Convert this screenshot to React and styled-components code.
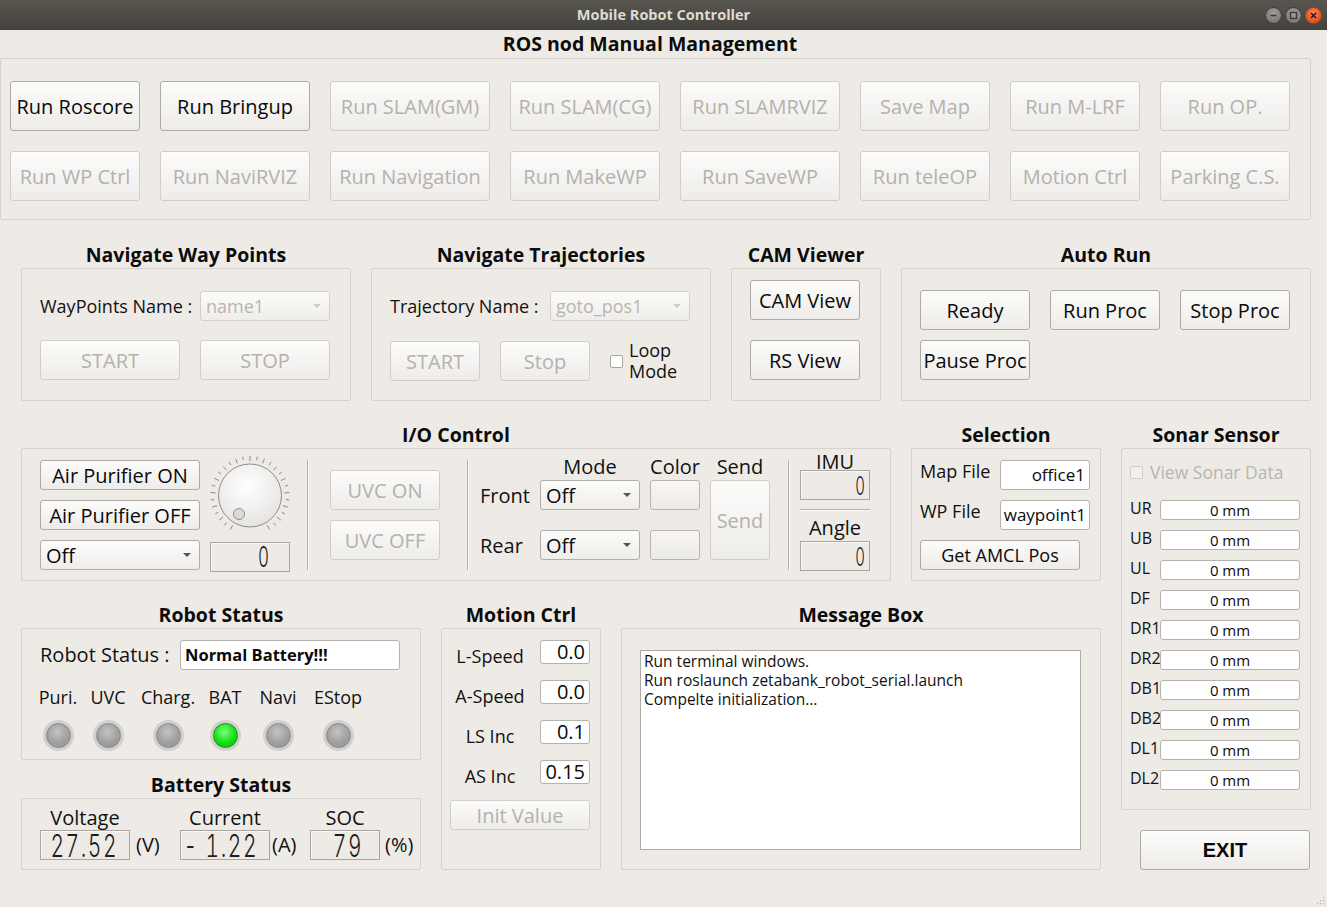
import React from 'react';
import styled, { createGlobalStyle } from 'styled-components';

const GlobalStyle = createGlobalStyle`
  html, body { margin: 0; padding: 0; background: #eeebe7; }
  body { font-family: "Open Sans", "Noto Sans", sans-serif; color: #111; }
  * { box-sizing: border-box; }
`;

const Window = styled.div`
  width: 1327px;
  height: 907px;
  background: #eeebe7;
  display: flex;
  flex-direction: column;
  position: relative;
  overflow: hidden;
`;

const TitleBar = styled.div`
  flex: none;
  height: 30px;
  display: grid;
  grid-template-columns: 1fr auto 1fr;
  align-items: center;
  background: linear-gradient(#58564f, #44423e);
  color: #dfdbd2;
  font-size: 14.5px;
  font-weight: 700;
`;

const TitleText = styled.div`
  grid-column: 2;
  margin-top: -2px;
`;

const WinButtons = styled.div`
  grid-column: 3;
  justify-self: end;
  display: flex;
  gap: 3px;
  padding-right: 5px;
`;

const WinBtn = styled.div`
  width: 17px;
  height: 17px;
  border-radius: 50%;
  display: flex;
  align-items: center;
  justify-content: center;
  background: ${p => (p.$close
    ? 'radial-gradient(circle at 50% 35%, #f7875a, #e0501c 75%)'
    : 'radial-gradient(circle at 50% 35%, #a3a09a, #7b7974 75%)')};
  border: 1px solid ${p => (p.$close ? '#b5430f' : '#3f3e3a')};
`;

const Content = styled.div`
  flex: 1;
  display: flex;
  flex-direction: column;
`;

const MainTitle = styled.h1`
  margin: 0;
  width: 1300px;
  height: 28px;
  line-height: 28px;
  text-align: center;
  font-size: 19.5px;
  font-weight: 700;
  color: #0c0c0c;
`;

const Panel = styled.div`
  width: ${p => (p.$w ? `${p.$w}px` : '100%')};
  height: ${p => p.$h}px;
  border: 1px solid #d5d1cc;
  border-radius: 2px;
  padding: ${p => p.$pad || '0'};
`;

const LaunchGrid = styled.div`
  display: grid;
  grid-template-columns: 130px 150px 160px 150px 160px 130px 130px 130px;
  grid-auto-rows: 50px;
  column-gap: 20px;
  row-gap: 20px;
`;

const Button = styled.button`
  width: ${p => (p.$w ? `${p.$w}px` : '100%')};
  height: ${p => (p.$h ? `${p.$h}px` : '100%')};
  margin: 0;
  padding: 0;
  font-family: ${p => (p.$bold ? '"Liberation Sans", Arial, sans-serif' : '"Open Sans", sans-serif')};
  font-size: ${p => p.$fs || 20}px;
  font-weight: ${p => (p.$bold ? 700 : 400)};
  color: ${p => (p.disabled ? '#b4b1ac' : '#0a0a0a')};
  background: linear-gradient(#fcfcfb, #eeece9);
  border: 1px solid ${p => (p.disabled ? '#d1cec9' : '#aeaba6')};
  border-radius: 3px;
  white-space: nowrap;
  display: flex;
  align-items: center;
  justify-content: center;
  flex: none;
`;

const Row = styled.div`
  display: flex;
  align-items: flex-start;
  gap: ${p => p.$gap ?? 20}px;
  padding-left: ${p => p.$pl || 0}px;
  margin-top: ${p => p.$mt || 0}px;
`;

const Col = styled.div`
  display: flex;
  flex-direction: column;
  gap: ${p => p.$gap || 0}px;
  width: ${p => (p.$w ? `${p.$w}px` : 'auto')};
  margin-top: ${p => p.$mt || 0}px;
  margin-left: ${p => p.$ml || 0}px;
  flex: none;
`;

const GroupBox = styled.section`
  display: flex;
  flex-direction: column;
  width: ${p => p.$w}px;
  flex: none;
`;

const GroupTitle = styled.h2`
  margin: 0;
  height: 27px;
  line-height: 27px;
  text-align: center;
  font-size: 19.5px;
  font-weight: 700;
  color: #0c0c0c;
  white-space: nowrap;
`;

const Group = ({ title, w, h, pad, children }) => (
  <GroupBox $w={w}>
    <GroupTitle>{title}</GroupTitle>
    <Panel $h={h} $pad={pad}>{children}</Panel>
  </GroupBox>
);

const Label = styled.span`
  display: block;
  width: ${p => (p.$w ? `${p.$w}px` : 'auto')};
  font-size: ${p => p.$fs || 18}px;
  line-height: ${p => p.$lh || 24}px;
  text-align: ${p => p.$align || 'left'};
  white-space: nowrap;
  flex: none;
  color: #111;
`;

const FieldRow = styled.div`
  display: flex;
  align-items: ${p => p.$align || 'center'};
  margin-top: ${p => p.$mt || 0}px;
  gap: ${p => p.$gap || 0}px;
`;

const Combo = styled.div`
  width: ${p => (p.$w ? `${p.$w}px` : '100%')};
  height: ${p => (p.$h ? `${p.$h}px` : '100%')};
  display: flex;
  align-items: center;
  justify-content: space-between;
  padding: 0 8px 0 5px;
  border: 1px solid ${p => (p.$disabled ? '#d3d0cb' : '#b1aea9')};
  border-radius: 3px;
  background: linear-gradient(#fcfcfb, #efedea);
  font-size: ${p => p.$fs || 20}px;
  color: ${p => (p.$disabled ? '#b8b5b0' : '#0a0a0a')};
  flex: none;
`;

const Caret = styled.span`
  width: 0;
  height: 0;
  border-left: 4px solid transparent;
  border-right: 4px solid transparent;
  border-top: 4px solid ${p => (p.$disabled ? '#cdcac5' : '#555')};
`;

const Field = styled.div`
  width: ${p => p.$w}px;
  height: ${p => p.$h}px;
  background: #fff;
  border: 1px solid #b6b3ae;
  border-radius: 3px;
  font-size: ${p => p.$fs || 18}px;
  font-weight: ${p => (p.$bold ? 700 : 400)};
  line-height: ${p => p.$h - 2}px;
  text-align: ${p => p.$align || 'left'};
  padding: 0 ${p => p.$pr ?? 4}px 0 ${p => p.$pl ?? 4}px;
  white-space: nowrap;
  flex: none;
  color: #0a0a0a;
`;

const CheckBox = styled.span`
  width: 13px;
  height: 13px;
  border: 1px solid ${p => (p.$disabled ? '#d2cfca' : '#a9a6a1')};
  border-radius: 2px;
  background: ${p => (p.$disabled ? '#f2f1ef' : '#fff')};
  flex: none;
`;

const CheckText = styled.span`
  margin-left: ${p => p.$ml || 6}px;
  font-size: ${p => p.$fs || 18}px;
  line-height: ${p => p.$lh || 21}px;
  color: ${p => (p.$disabled ? '#b8b5b0' : '#111')};
  white-space: nowrap;
`;

const AutoGrid = styled.div`
  display: grid;
  grid-template-columns: repeat(3, 110px);
  grid-auto-rows: 40px;
  column-gap: 20px;
  row-gap: 10px;
`;

const IOBody = styled.div`
  display: flex;
  align-items: flex-start;
`;

const VSep = styled.div`
  flex: none;
  width: 2px;
  height: 110px;
  border-left: 1px solid #b3b0ab;
  border-right: 1px solid #fbfaf8;
  margin-left: ${p => p.$ml}px;
`;

const HSep = styled.div`
  height: 2px;
  border-top: 1px solid #b3b0ab;
  border-bottom: 1px solid #fbfaf8;
  margin: ${p => p.$m};
`;

const LightGrid = styled.div`
  margin-left: ${p => p.$ml}px;
  display: grid;
  grid-template-columns: 50px 100px 50px 60px;
  grid-template-rows: 20px 30px 20px 30px;
  column-gap: 10px;
  flex: none;
`;

const HeadCell = styled.span`
  grid-row: 1;
  grid-column: ${p => p.$col};
  justify-self: center;
  font-size: 20px;
  line-height: 14px;
  white-space: nowrap;
`;

const SideCell = styled.span`
  grid-column: 1;
  grid-row: ${p => p.$row};
  align-self: center;
  font-size: 20px;
  line-height: 30px;
  padding-top: 2px;
  white-space: nowrap;
`;

const Swatch = styled.div`
  grid-column: 3;
  grid-row: ${p => p.$row};
  border: 1px solid #b8b5b0;
  border-radius: 3px;
  background: linear-gradient(#f8f7f6, #eceae7);
`;

const GridSlot = styled.div`
  grid-column: ${p => p.$col};
  grid-row: ${p => p.$row};
`;

const Lcd = styled.div`
  width: ${p => p.$w}px;
  height: ${p => p.$h}px;
  border: 1px solid #a9a6a1;
  box-shadow: inset 1px 1px 0 #faf9f7;
  display: flex;
  align-items: center;
  justify-content: flex-end;
  padding-right: ${p => p.$pr}px;
  flex: none;
`;

const LcdText = styled.span`
  display: inline-block;
  font-family: Inter, "Liberation Sans", sans-serif;
  font-weight: 300;
  font-variant-numeric: tabular-nums;
  font-size: ${p => p.$fs}px;
  line-height: 1;
  transform: scaleY(${p => p.$sy});
  color: #1d1d1d;
  letter-spacing: ${p => p.$ls || 0}px;
  white-space: pre;
`;

const LedGrid = styled.div`
  display: grid;
  grid-template-columns: 36px 64px 56px 58px 48px 72px;
  grid-template-rows: 24px 31px;
  row-gap: 11px;
  justify-items: center;
  margin-top: 15px;
`;

const Led = styled.div`
  width: 31px;
  height: 31px;
  border-radius: 50%;
  background: radial-gradient(circle, #d2d0cd 70%, #e6e4e1 100%);
  display: flex;
  align-items: center;
  justify-content: center;
  &::after {
    content: '';
    width: 25px;
    height: 25px;
    border-radius: 50%;
    box-sizing: border-box;
    border: 1px solid ${p => (p.$on ? '#0e9a0e' : '#8a8a8a')};
    background: ${p => (p.$on
      ? 'radial-gradient(circle at 45% 35%, #7dff7d, #12e012 55%, #0bb80b)'
      : 'radial-gradient(circle at 45% 35%, #c4c4c4, #a0a0a0 55%, #929292)')};
  }
`;

const BatRow = styled.div`
  display: grid;
  grid-template-columns: 140px 130px auto;
`;

const BatCell = styled.div`
  display: grid;
  grid-template-columns: ${p => p.$lw}px auto;
  grid-template-rows: 25px 30px;
  align-items: center;
`;

const BatLabel = styled.span`
  grid-column: 1;
  justify-self: center;
  font-size: 20px;
  line-height: 25px;
  white-space: nowrap;
`;

const Unit = styled.span`
  margin-left: ${p => p.$ml}px;
  font-size: 20px;
  line-height: 30px;
  white-space: nowrap;
`;

const MotionGrid = styled.div`
  display: grid;
  grid-template-columns: 80px 50px;
  grid-template-rows: repeat(4, 24px) 30px;
  column-gap: 10px;
  row-gap: 16px;
`;

const MotionLabel = styled.span`
  justify-self: center;
  font-size: 18px;
  line-height: 24px;
  padding-top: 4px;
  white-space: nowrap;
`;

const WideSlot = styled.div`
  grid-column: 1 / 3;
`;

const TextArea = styled.div`
  width: 441px;
  height: 200px;
  background: #fff;
  border: 1px solid #aeaba7;
  padding: 1px 3px;
  font-size: 15.5px;
  line-height: 19px;
  color: #111;
  white-space: pre;
`;

const SonarList = styled.div`
  display: flex;
  flex-direction: column;
  gap: 10px;
  margin-top: 18px;
`;

const SonarLabel = styled.span`
  width: 30px;
  font-size: 16px;
  line-height: 20px;
  margin-top: -4px;
  flex: none;
  white-space: nowrap;
`;

const ExitWrap = styled.div`
  margin: 20px 0 0 19px;
`;

const Grip = styled.svg`
  position: absolute;
  right: 2px;
  bottom: 2px;
`;

const launch = [
  ['Run Roscore', true], ['Run Bringup', true], ['Run SLAM(GM)'], ['Run SLAM(CG)'],
  ['Run SLAMRVIZ'], ['Save Map'], ['Run M-LRF'], ['Run OP.'],
  ['Run WP Ctrl'], ['Run NaviRVIZ'], ['Run Navigation'], ['Run MakeWP'],
  ['Run SaveWP'], ['Run teleOP'], ['Motion Ctrl'], ['Parking C.S.'],
];

const sonar = ['UR', 'UB', 'UL', 'DF', 'DR1', 'DR2', 'DB1', 'DB2', 'DL1', 'DL2'];

const leds = [
  ['Puri.', false], ['UVC', false], ['Charg.', false], ['BAT', true], ['Navi', false], ['EStop', false],
];

const motion = [['L-Speed', '0.0'], ['A-Speed', '0.0'], ['LS Inc', '0.1'], ['AS Inc', '0.15']];

const Dial = () => {
  const ticks = [];
  const n = 28;
  for (let i = 0; i <= n; i += 1) {
    const a = ((240 - (i * 300) / n) * Math.PI) / 180;
    const r1 = i % 2 === 0 ? 34.5 : 36;
    const r2 = 39.5;
    ticks.push(
      <line
        key={i}
        x1={Math.cos(a) * r1}
        y1={-Math.sin(a) * r1}
        x2={Math.cos(a) * r2}
        y2={-Math.sin(a) * r2}
      />,
    );
  }
  return (
    <svg width="80" height="77" viewBox="-40 -35.5 80 77" style={{ overflow: 'visible', display: 'block' }}>
      <defs>
        <radialGradient id="knob" cx="45%" cy="35%" r="70%">
          <stop offset="0%" stopColor="#ffffff" />
          <stop offset="100%" stopColor="#e4e2df" />
        </radialGradient>
      </defs>
      <g stroke="#8d8b87" strokeWidth="1">{ticks}</g>
      <circle cx="0" cy="0" r="31.5" fill="url(#knob)" stroke="#8f8d89" strokeWidth="1" />
      <circle cx="-11" cy="18.5" r="5.5" fill="#dddbd8" stroke="#8f8d89" strokeWidth="1" />
    </svg>
  );
};

export default function App() {
  return (
    <>
      <GlobalStyle />
      <Window>
        <TitleBar>
          <TitleText>Mobile Robot Controller</TitleText>
          <WinButtons>
            <WinBtn>
              <svg width="9" height="9" viewBox="0 0 9 9">
                <line x1="1.5" y1="4.5" x2="7.5" y2="4.5" stroke="#3a3935" strokeWidth="1.6" />
              </svg>
            </WinBtn>
            <WinBtn>
              <svg width="9" height="9" viewBox="0 0 9 9">
                <rect x="1.5" y="1.5" width="6" height="6" fill="none" stroke="#3a3935" strokeWidth="1.3" />
              </svg>
            </WinBtn>
            <WinBtn $close>
              <svg width="9" height="9" viewBox="0 0 9 9">
                <path d="M2 2 L7 7 M7 2 L2 7" stroke="#3b1608" strokeWidth="1.6" />
              </svg>
            </WinBtn>
          </WinButtons>
        </TitleBar>

        <Content>
          <MainTitle>ROS nod Manual Management</MainTitle>
          <Panel $w={1311} $h={162} $pad="22px 0 0 9px">
            <LaunchGrid>
              {launch.map(([label, on]) => (
                <Button key={label} disabled={!on}>{label}</Button>
              ))}
            </LaunchGrid>
          </Panel>

          <Row $pl={21} $mt={21}>
            <Group title="Navigate Way Points" w={330} h={133} pad="22px 0 0 18px">
              <FieldRow>
                <Label $w={160}>WayPoints Name :</Label>
                <Combo $w={130} $h={30} $fs={18} $disabled>
                  name1
                  <Caret $disabled />
                </Combo>
              </FieldRow>
              <FieldRow $mt={19} $gap={20}>
                <Button $w={140} $h={40} disabled>START</Button>
                <Button $w={130} $h={40} disabled>STOP</Button>
              </FieldRow>
            </Group>

            <Group title="Navigate Trajectories" w={340} h={133} pad="22px 0 0 18px">
              <FieldRow>
                <Label $w={160}>Trajectory Name :</Label>
                <Combo $w={140} $h={30} $fs={18} $disabled>
                  goto_pos1
                  <Caret $disabled />
                </Combo>
              </FieldRow>
              <FieldRow $mt={19} $gap={20}>
                <Button $w={90} $h={40} disabled>START</Button>
                <Button $w={90} $h={40} disabled>Stop</Button>
                <FieldRow>
                  <CheckBox />
                  <CheckText>
                    Loop
                    <br />
                    Mode
                  </CheckText>
                </FieldRow>
              </FieldRow>
            </Group>

            <Group title="CAM Viewer" w={150} h={133} pad="11px 0 0 18px">
              <Col $gap={20}>
                <Button $w={110} $h={40}>CAM View</Button>
                <Button $w={110} $h={40}>RS View</Button>
              </Col>
            </Group>

            <Group title="Auto Run" w={410} h={133} pad="21px 0 0 18px">
              <AutoGrid>
                <Button>Ready</Button>
                <Button>Run Proc</Button>
                <Button>Stop Proc</Button>
                <Button>Pause Proc</Button>
              </AutoGrid>
            </Group>
          </Row>

          <Row $pl={21} $mt={20}>
            <Col $w={1080}>
              <Row>
                <Group title="I/O Control" w={870} h={133} pad="11px 0 0 18px">
                  <IOBody>
                    <Col $w={160} $gap={10}>
                      <Button $w={160} $h={30}>Air Purifier ON</Button>
                      <Button $w={160} $h={30}>Air Purifier OFF</Button>
                      <Combo $w={160} $h={30}>
                        Off
                        <Caret />
                      </Combo>
                    </Col>
                    <Col $w={80} $ml={10} $gap={5}>
                      <Dial />
                      <Lcd $w={80} $h={30} $pr={20}>
                        <LcdText $fs={17} $sy={1.7}>0</LcdText>
                      </Lcd>
                    </Col>
                    <VSep $ml={17} />
                    <Col $w={110} $ml={21} $mt={10} $gap={10}>
                      <Button $w={110} $h={40} disabled>UVC ON</Button>
                      <Button $w={110} $h={40} disabled>UVC OFF</Button>
                    </Col>
                    <VSep $ml={27} />
                    <LightGrid $ml={11}>
                      <HeadCell $col={2}>Mode</HeadCell>
                      <HeadCell $col={3}>Color</HeadCell>
                      <HeadCell $col={4}>Send</HeadCell>
                      <SideCell $row={2}>Front</SideCell>
                      <SideCell $row={4}>Rear</SideCell>
                      <GridSlot $col={2} $row={2}>
                        <Combo>
                          Off
                          <Caret />
                        </Combo>
                      </GridSlot>
                      <GridSlot $col={2} $row={4}>
                        <Combo>
                          Off
                          <Caret />
                        </Combo>
                      </GridSlot>
                      <Swatch $row={2} />
                      <Swatch $row={4} />
                      <GridSlot $col={4} $row="2 / 5">
                        <Button disabled>Send</Button>
                      </GridSlot>
                    </LightGrid>
                    <VSep $ml={18} />
                    <Col $w={70} $ml={10} $mt={-6}>
                      <Label $fs={20} $lh={16} $align="center" $w={70}>IMU</Label>
                      <Lcd $w={70} $h={30} $pr={4}>
                        <LcdText $fs={15} $sy={1.75}>0</LcdText>
                      </Lcd>
                      <HSep $m="9px 0 4px" />
                      <Label $fs={20} $lh={26} $align="center" $w={70}>Angle</Label>
                      <Lcd $w={70} $h={30} $pr={4}>
                        <LcdText $fs={15} $sy={1.75}>0</LcdText>
                      </Lcd>
                    </Col>
                  </IOBody>
                </Group>

                <Group title="Selection" w={190} h={133} pad="11px 0 0 8px">
                  <Col $gap={10}>
                    <FieldRow $align="flex-start">
                      <Label $w={80} $lh={22}>Map File</Label>
                      <Field $w={90} $h={30} $fs={17} $align="right">office1</Field>
                    </FieldRow>
                    <FieldRow $align="flex-start">
                      <Label $w={80} $lh={22}>WP File</Label>
                      <Field $w={90} $h={30} $fs={17} $align="right" $pr={3} $pl={2}>waypoint1</Field>
                    </FieldRow>
                    <Button $w={160} $h={30} $fs={18}>Get AMCL Pos</Button>
                  </Col>
                </Group>
              </Row>

              <Row $mt={20}>
                <Col $w={400} $gap={11}>
                  <Group title="Robot Status" w={400} h={132} pad="11px 0 0 18px">
                    <FieldRow>
                      <Label $w={140} $fs={20} $lh={30}>Robot Status :</Label>
                      <Field $w={220} $h={30} $fs={16.5} $bold>Normal Battery!!!</Field>
                    </FieldRow>
                    <LedGrid>
                      {leds.map(([name]) => (
                        <Label key={name} $lh={24}>{name}</Label>
                      ))}
                      {leds.map(([name, on]) => (
                        <Led key={`${name}-led`} $on={on} />
                      ))}
                    </LedGrid>
                  </Group>
                  <Group title="Battery Status" w={400} h={72} pad="6px 0 0 18px">
                    <BatRow>
                      <BatCell $lw={90}>
                        <BatLabel>Voltage</BatLabel>
                        <span />
                        <Lcd $w={90} $h={30} $pr={11}>
                          <LcdText $fs={21} $sy={1.5} $ls={1.5}>27.52</LcdText>
                        </Lcd>
                        <Unit $ml={6}>(V)</Unit>
                      </BatCell>
                      <BatCell $lw={90}>
                        <BatLabel>Current</BatLabel>
                        <span />
                        <Lcd $w={90} $h={30} $pr={11}>
                          <LcdText $fs={21} $sy={1.5} $ls={1.5}>- 1.22</LcdText>
                        </Lcd>
                        <Unit $ml={2}>(A)</Unit>
                      </BatCell>
                      <BatCell $lw={70}>
                        <BatLabel>SOC</BatLabel>
                        <span />
                        <Lcd $w={70} $h={30} $pr={16}>
                          <LcdText $fs={21} $sy={1.5} $ls={1.5}>79</LcdText>
                        </Lcd>
                        <Unit $ml={5}>(%)</Unit>
                      </BatCell>
                    </BatRow>
                  </Group>
                </Col>

                <Group title="Motion Ctrl" w={160} h={242} pad="11px 0 0 8px">
                  <MotionGrid>
                    {motion.map(([name, val]) => (
                      <React.Fragment key={name}>
                        <MotionLabel>{name}</MotionLabel>
                        <Field $w={50} $h={24} $fs={20} $align="right" $pr={4} $pl={1}>{val}</Field>
                      </React.Fragment>
                    ))}
                    <WideSlot>
                      <Button $w={140} $h={30} disabled>Init Value</Button>
                    </WideSlot>
                  </MotionGrid>
                </Group>

                <Group title="Message Box" w={480} h={242} pad="21px 0 0 18px">
                  <TextArea>
                    {'Run terminal windows.\nRun roslaunch zetabank_robot_serial.launch\nCompelte initialization...'}
                  </TextArea>
                </Group>
              </Row>
            </Col>

            <Col $w={190}>
              <Group title="Sonar Sensor" w={190} h={362} pad="13px 0 0 8px">
                <FieldRow>
                  <CheckBox $disabled />
                  <CheckText $disabled $fs={17.5} $lh={20} $ml={7}>View Sonar Data</CheckText>
                </FieldRow>
                <SonarList>
                  {sonar.map(s => (
                    <FieldRow key={s}>
                      <SonarLabel>{s}</SonarLabel>
                      <Field $w={140} $h={20} $fs={15} $align="center">0 mm</Field>
                    </FieldRow>
                  ))}
                </SonarList>
              </Group>
              <ExitWrap>
                <Button $w={170} $h={40} $bold>EXIT</Button>
              </ExitWrap>
            </Col>
          </Row>
        </Content>

        <Grip width="10" height="10" viewBox="0 0 10 10">
          <g fill="#b9b6b1">
            <rect x="8" y="2" width="1.2" height="1.2" />
            <rect x="5" y="5" width="1.2" height="1.2" />
            <rect x="8" y="5" width="1.2" height="1.2" />
            <rect x="2" y="8" width="1.2" height="1.2" />
            <rect x="5" y="8" width="1.2" height="1.2" />
            <rect x="8" y="8" width="1.2" height="1.2" />
          </g>
        </Grip>
      </Window>
    </>
  );
}
